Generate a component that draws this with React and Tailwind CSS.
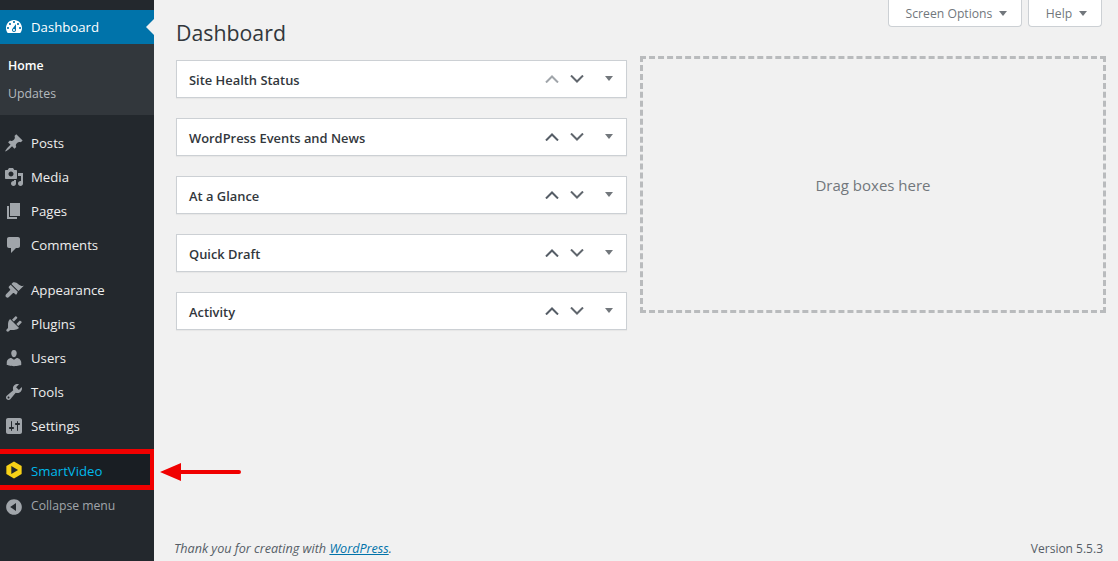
const icons = {
  dashboard: 'M3.76 16h12.48c1.1-1.37 1.76-3.11 1.76-5 0-4.42-3.58-8-8-8s-8 3.58-8 8c0 1.89.66 3.63 1.76 5zM10 4c.55 0 1 .45 1 1s-.45 1-1 1-1-.45-1-1 .45-1 1-1zM6 6c.55 0 1 .45 1 1s-.45 1-1 1-1-.45-1-1 .45-1 1-1zm8 0c.55 0 1 .45 1 1s-.45 1-1 1-1-.45-1-1 .45-1 1-1zm-5.37 5.55L12 7v6c0 1.1-.9 2-2 2s-2-.9-2-2c0-.57.24-1.08.63-1.45zM4 10c.55 0 1 .45 1 1s-.45 1-1 1-1-.45-1-1 .45-1 1-1zm12 0c.55 0 1 .45 1 1s-.45 1-1 1-1-.45-1-1 .45-1 1-1zm-5 3c0-.55-.45-1-1-1s-1 .45-1 1 .45 1 1 1 1-.45 1-1z',
  posts: 'M10.44 3.02l1.82-1.82 6.36 6.35-1.83 1.82c-1.05-.68-2.48-.57-3.41.36l-.75.75c-.92.93-1.04 2.35-.35 3.41l-1.83 1.82-2.41-2.41-2.8 2.79c-.42.42-3.38 2.71-3.8 2.29s1.86-3.39 2.28-3.81l2.79-2.79L4.1 9.36l1.83-1.82c1.05.69 2.48.57 3.4-.36l.75-.75c.93-.92 1.05-2.35.36-3.41z',
  media: 'M13 11V4c0-.55-.45-1-1-1h-1.67L9 1H5L3.67 3H2c-.55 0-1 .45-1 1v7c0 .55.45 1 1 1h10c.55 0 1-.45 1-1zM7 4.5c1.38 0 2.5 1.12 2.5 2.5S8.38 9.5 7 9.5 4.5 8.38 4.5 7 5.62 4.5 7 4.5zM14 6h5v10.5c0 1.38-1.12 2.5-2.5 2.5S14 17.88 14 16.5s1.12-2.5 2.5-2.5c.17 0 .34.02.5.05V9h-3V6zm-4 8.05V13h2v3.5c0 1.38-1.12 2.5-2.5 2.5S7 17.88 7 16.5 8.12 14 9.5 14c.17 0 .34.02.5.05z',
  pages: 'M6 15V2h10v13H6zm-1 1h8v2H3V5h2v11z',
  comments: 'M5 2h9c1.1 0 2 .9 2 2v7c0 1.1-.9 2-2 2h-2l-5 5v-5H5c-1.1 0-2-.9-2-2V4c0-1.1.9-2 2-2z',
  appearance: 'M14.48 11.06L7.41 3.99l1.5-1.5c.5-.56 2.3-.47 3.51.32 1.21.8 1.43 1.28 2.91 2.1 1.18.64 2.45 1.26 4.45.85zm-.71.71L6.7 4.7 4.93 6.47c-.39.39-.39 1.02 0 1.41l1.06 1.06c.39.39.39 1.02 0 1.41l-3.9 3.9c-.78.78-.78 2.05 0 2.83s2.05.78 2.83 0l3.9-3.9c.39-.39 1.02-.39 1.41 0l1.06 1.06c.39.39 1.02.39 1.41 0z',
  plugins: 'M13.11 4.36L9.87 7.6 8 5.73l3.24-3.24c.35-.34 1.05-.2 1.56.32.52.51.66 1.21.31 1.55zm-8 1.77l.91-1.12 9.01 9.01-1.19.84c-.71.71-2.63 1.16-3.82 1.16H6.14L4.9 17.26c-.59.59-1.54.59-2.12 0-.59-.58-.59-1.53 0-2.12l1.24-1.24v-3.88c0-1.13.4-3.19 1.09-3.89zm7.26 3.97l3.24-3.24c.34-.35 1.04-.21 1.55.31.52.51.66 1.21.31 1.55l-3.24 3.25z',
  users: 'M10 9.25c-2.27 0-2.73-3.44-2.73-3.44C7 4.02 7.82 2 9.97 2c2.16 0 2.98 2.02 2.71 3.81 0 0-.41 3.44-2.68 3.44zm0 2.57L12.72 10c2.39 0 4.52 2.33 4.52 4.53v2.49s-3.65 1.13-7.24 1.13c-3.65 0-7.24-1.13-7.24-1.13v-2.49c0-2.25 1.94-4.48 4.47-4.48z',
  tools: 'M16.68 9.77c-1.34 1.34-3.3 1.67-4.95.99l-5.41 6.52c-.99.99-2.59.99-3.58 0s-.99-2.59 0-3.57l6.52-5.42c-.68-1.65-.35-3.61.99-4.95 1.28-1.28 3.12-1.62 4.72-1.06l-2.89 2.89 2.82 2.82 2.86-2.87c.53 1.58.18 3.39-1.08 4.65zM3.81 16.21c.4.39 1.04.39 1.43 0 .4-.4.4-1.04 0-1.43-.39-.4-1.03-.4-1.43 0-.39.39-.39 1.03 0 1.43z',
  settings: 'M18 16V4c0-1.1-.9-2-2-2H4c-1.1 0-2 .9-2 2v12c0 1.1.9 2 2 2h12c1.1 0 2-.9 2-2zM8 11h1c.55 0 1 .45 1 1s-.45 1-1 1H8v1.5c0 .28-.22.5-.5.5s-.5-.22-.5-.5V13H6c-.55 0-1-.45-1-1s.45-1 1-1h1V5.5c0-.28.22-.5.5-.5s.5.22.5.5V11zm5-2h-1c-.55 0-1-.45-1-1s.45-1 1-1h1V5.5c0-.28.22-.5.5-.5s.5.22.5.5V7h1c.55 0 1 .45 1 1s-.45 1-1 1h-1v5.5c0 .28-.22.5-.5.5s-.5-.22-.5-.5V9z',
  collapse: 'M10 2.16c4.33 0 7.84 3.51 7.84 7.84s-3.51 7.84-7.84 7.84S2.16 14.33 2.16 10 5.71 2.16 10 2.16zm2 11.72V6.12L6.18 9.97z',
};

const Dashicon = ({ name, className }) => (
  <svg viewBox="0 0 20 20" fill="currentColor" fillRule="evenodd" className={`w-5 h-5 shrink-0 ${className}`}>
    <path d={icons[name]} />
  </svg>
);

const MenuItem = ({ icon, label }) => (
  <a className="flex items-center h-[34px] pl-1 gap-[7px] text-[13.2px] text-[#eeeeee]">
    <Dashicon name={icon} className="text-[#a0a5aa]" />
    <span className="mt-[2px]">{label}</span>
  </a>
);

const Caret = () => (
  <svg viewBox="0 0 10 6" className="w-[8px] h-[5px] fill-[#72777c]">
    <path d="M0 0h10L5 6z" />
  </svg>
);

const Postbox = ({ title, first }) => (
  <div className="flex items-center justify-between h-[38px] bg-white border border-[#ccd0d4] shadow-[0_1px_1px_rgba(0,0,0,0.04)] pl-3 pr-[13px]">
    <span className="mt-[4px] text-[12.9px] font-semibold text-[#32373c]">{title}</span>
    <div className="flex items-center gap-[11px] pb-px">
      <svg viewBox="0 0 14 8" fill="none" strokeWidth="2" className={`w-[14px] h-[8px] ${first ? 'stroke-[#a0a5aa]' : 'stroke-[#555d66]'}`}>
        <path d="M1 7.5L7 1.5L13 7.5" />
      </svg>
      <svg viewBox="0 0 14 8" fill="none" strokeWidth="2" className="w-[14px] h-[8px] stroke-[#60666d]">
        <path d="M1 .5L7 6.5L13 .5" />
      </svg>
      <div className="ml-[10px]">
        <Caret />
      </div>
    </div>
  </div>
);

const TopButton = ({ label, className }) => (
  <button className={`flex items-center justify-center gap-[7px] h-[27px] pl-[3px] bg-white border border-t-0 border-[#ccd0d4] rounded-b-[4px] text-[12.2px] text-[#72777c] ${className}`}>
    <span className="mt-[2px]">{label}</span>
    <Caret />
  </button>
);

export default function App() {
  const boxes = ['Site Health Status', 'WordPress Events and News', 'At a Glance', 'Quick Draft', 'Activity'];

  return (
    <div className="relative flex h-[561px] overflow-hidden bg-[#f1f1f1] font-['Open_Sans','Noto_Sans',sans-serif]">
      {/* Sidebar */}
      <aside className="w-[154px] shrink-0 bg-[#23282d] pt-[10px]">
        <div className="relative flex items-center h-[34px] pl-1 gap-[7px] bg-[#0073aa] text-[13.2px] text-white">
          <Dashicon name="dashboard" className="text-white" />
          <span className="mt-px">Dashboard</span>
          <div className="absolute right-0 top-[9px] border-y-[8px] border-r-[8px] border-y-transparent border-r-[#f1f1f1]" />
        </div>
        <div className="h-[71px] bg-[#32373c] pt-2 pl-2 text-[12.3px]">
          <div className="h-[28px] leading-[28px] font-semibold text-white">Home</div>
          <div className="h-[28px] leading-[28px] text-[#b4b9be]">Updates</div>
        </div>
        <div className="pt-[11px]">
          <MenuItem icon="posts" label="Posts" />
          <MenuItem icon="media" label="Media" />
          <MenuItem icon="pages" label="Pages" />
          <MenuItem icon="comments" label="Comments" />
        </div>
        <div className="pt-[11px]">
          <MenuItem icon="appearance" label="Appearance" />
          <MenuItem icon="plugins" label="Plugins" />
          <MenuItem icon="users" label="Users" />
          <MenuItem icon="tools" label="Tools" />
          <MenuItem icon="settings" label="Settings" />
        </div>
        <div className="mt-[6px] flex items-center h-[41px] pl-[5px] gap-[8px] bg-[#191e23] border-y-[5px] border-r-[4px] border-[#f00000] text-[13.2px] text-[#00b9eb]">
          <svg viewBox="0 0 20 20" className="w-[18px] h-[18px] shrink-0">
            <path d="M10 .5L18.5 5.5v9L10 19.5 1.5 14.5v-9z" fill="#f7d117" />
            <path d="M7 5.5l7.5 4.5L7 14.5z" fill="#23282d" />
          </svg>
          <span className="mt-[5px]">SmartVideo</span>
        </div>
        <div className="flex items-center h-[34px] pl-1 gap-[7px] text-[12.2px] text-[#a0a5aa]">
          <Dashicon name="collapse" className="text-[#a0a5aa]" />
          <span className="-mt-[2px]">Collapse menu</span>
        </div>
      </aside>

      {/* Main content */}
      <main className="flex-1 flex flex-col pl-[22px] pr-3">
        <div className="flex justify-between h-[56px]">
          <h1 className="pt-[17px] text-[21.3px] leading-[32px] text-[#32373c]">Dashboard</h1>
          <div className="flex gap-[6px] pr-1">
            <TopButton label="Screen Options" className="w-[134px]" />
            <TopButton label="Help" className="w-[74px]" />
          </div>
        </div>
        <div className="flex gap-[13px]">
          <div className="w-[451px] flex flex-col gap-5 pt-1">
            {boxes.map((title, i) => (
              <Postbox key={title} title={title} first={i === 0} />
            ))}
          </div>
          <div className="flex-1 flex items-center justify-center h-[257px] pt-px border-[3px] border-dashed border-[#b9bbbd] text-[15px] text-[#72777c]">
            Drag boxes here
          </div>
        </div>
        <footer className="mt-auto flex items-center justify-between h-[25px] pr-[3px] text-[12px] text-[#555d66]">
          <span className="-ml-[2px] mt-px italic text-[12.6px]">
            Thank you for creating with <a className="text-[#0073aa] underline">WordPress</a>.
          </span>
          <span>Version 5.5.3</span>
        </footer>
      </main>

      {/* Annotation arrow */}
      <svg viewBox="0 0 82 20" className="absolute left-[160px] top-[462px] w-[82px] h-[20px]">
        <path d="M0 10L21 1v7h58a2 2 0 0 1 0 4H21v7z" fill="#f00000" />
      </svg>
    </div>
  );
}
